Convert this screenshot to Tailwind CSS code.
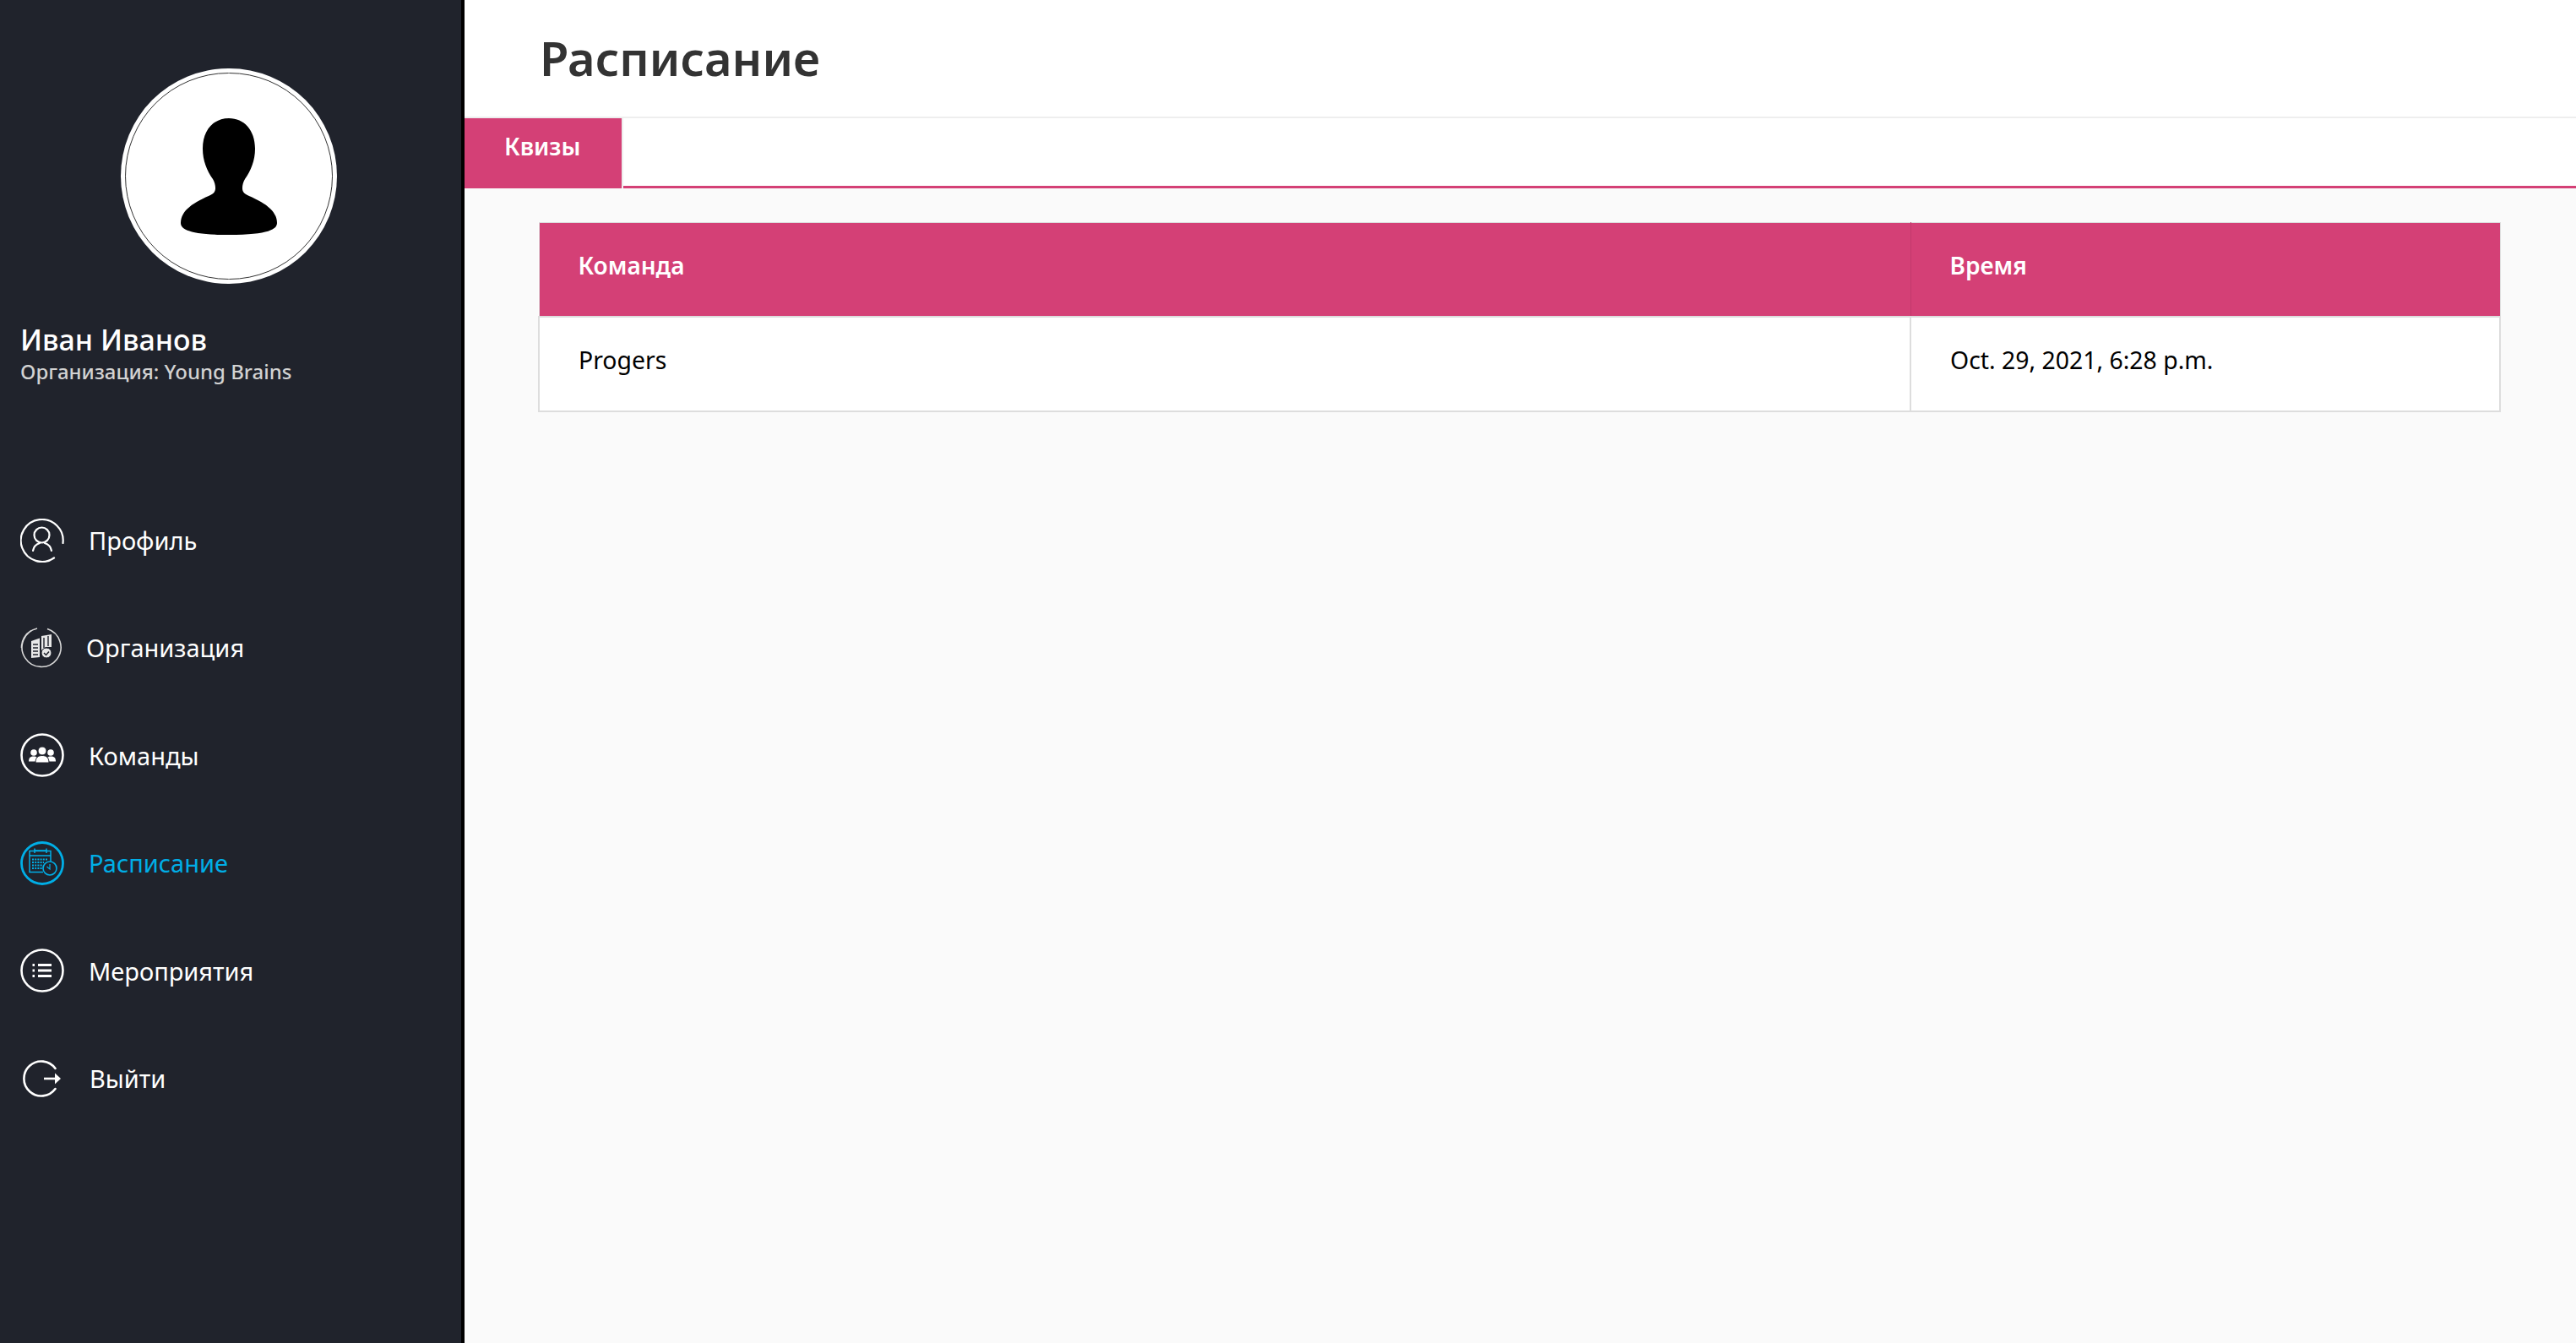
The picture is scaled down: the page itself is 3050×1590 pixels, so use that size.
<!DOCTYPE html>
<html lang="ru">
<head>
    <meta charset="UTF-8">
    <title>Расписание</title>
    <script src="https://cdn.jsdelivr.net/npm/@tailwindcss/browser@4"></script>
</head>
<body class="bg-[#fafafa] font-['Noto_Sans',sans-serif]">
    <div class="flex h-[1590px] overflow-hidden">
        <!-- Sidebar -->
        <aside class="w-[550px] shrink-0 bg-[#20232c] border-r-4 border-black pt-[81px]">
            <div class="flex justify-center pr-[4px]">
                <div class="w-[256px] h-[255px] rounded-full bg-white flex items-center justify-center">
                    <div class="w-[246px] h-[245px] rounded-full border border-[#333] flex items-center justify-center">
                        <svg class="w-[116px] h-[138px]" viewBox="0 0 116 138" fill="#000">
                            <path d="M58 0C40 0 27 14 27 36C27 50 32 62 39 72C42 77 43 84 41 87C39 91 30 93 20 99C8 106 1 114 1 124C1 131 10 138 58 138C106 138 115 131 115 124C115 114 108 106 96 99C86 93 77 91 75 87C73 84 74 77 77 72C84 62 89 50 89 36C89 14 76 0 58 0Z"/>
                        </svg>
                    </div>
                </div>
            </div>
            <div class="pl-[24px] mt-[43px]">
                <div class="text-[34px] leading-[46px] font-medium text-white">Иван Иванов</div>
                <div class="text-[24px] leading-[30px] font-medium text-[#d2d2d2]">Организация: Young Brains</div>
            </div>
            <nav class="mt-[121px] pl-[24px] text-[29px] text-white">
                <a class="flex items-center h-[127.4px]">
                    <svg class="w-[52px] h-[52px] shrink-0" viewBox="0 0 52 52" fill="none" stroke="currentColor" stroke-width="2.2" stroke-linecap="round">
                        <path d="M50.500 29A25 25 0 1 0 40 46.500"/>
                        <circle cx="25.500" cy="19.500" r="9"/>
                        <path d="M15 38C16 32 20 30 23 29M37 38C36 32 32 30 29 29"/>
                    </svg>
                    <span class="ml-[29px]">Профиль</span>
                </a>
                <a class="flex items-center h-[127.4px]">
                    <svg class="w-[52px] h-[52px] shrink-0" viewBox="0 0 52 52" fill="none">
                        <path d="M32 3.500A23 23 0 1 1 20 3M13 5.500A23 23 0 0 0 1.500 26" stroke="#d8d8d8" stroke-width="1.600"/>
                        <path d="M13 18L23 14.500V37L13 38Z" fill="#e8e8e8"/>
                        <path d="M15 22H21M15 26H21M15 30H21M15 34H21" stroke="#20232c" stroke-width="1.500"/>
                        <path d="M25 12L37 10V25H30L25 29Z" fill="#e8e8e8"/>
                        <path d="M28 14V26M33 12V24" stroke="#20232c" stroke-width="1.400"/>
                        <circle cx="31" cy="32" r="6" fill="#e8e8e8" stroke="#20232c" stroke-width="1"/>
                        <path d="M28 32L30.500 34.500L34 30.500" stroke="#20232c" stroke-width="1.500"/>
                    </svg>
                    <span class="ml-[26px]">Организация</span>
                </a>
                <a class="flex items-center h-[127.4px]">
                    <svg class="w-[52px] h-[52px] shrink-0" viewBox="0 0 52 52" fill="none">
                        <circle cx="26" cy="26" r="24.500" stroke="currentColor" stroke-width="2.600"/>
                        <g fill="currentColor">
                            <circle cx="16" cy="23" r="3.800"/>
                            <path d="M10 33.500C10 29 12 27.500 16 27.500C19 27.500 21 29 21 33.500Z"/>
                            <circle cx="36" cy="23" r="3.800"/>
                            <path d="M42 33.500C42 29 40 27.500 36 27.500C33 27.500 31 29 31 33.500Z"/>
                            <circle cx="26" cy="21" r="5" stroke="#20232c" stroke-width="1"/>
                            <path d="M18 35C18 29 21 26.500 26 26.500C31 26.500 34 29 34 35Z" stroke="#20232c" stroke-width="1"/>
                        </g>
                    </svg>
                    <span class="ml-[29px]">Команды</span>
                </a>
                <a class="flex items-center h-[127.4px] text-[#00aee6]">
                    <svg class="w-[52px] h-[52px] shrink-0" viewBox="0 0 52 52" fill="none" stroke="currentColor">
                        <circle cx="26" cy="26" r="24.500" stroke-width="2.800"/>
                        <path d="M27 36.500H11V11.500H36V24" stroke-width="1.500"/>
                        <path d="M11 17H36M17 8.500V14M31 8.500V14M17 11H31" stroke-width="1.500"/>
                        <path d="M14 21.500H33M14 25H28M14 28.500H26M14 32H26" stroke-width="2" stroke-dasharray="2 1.200"/>
                        <circle cx="35" cy="32" r="8" stroke-width="1.600" fill="#20232c"/>
                        <path d="M35 27V33L31.500 30" stroke-width="1.200"/>
                    </svg>
                    <span class="ml-[29px]">Расписание</span>
                </a>
                <a class="flex items-center h-[127.4px]">
                    <svg class="w-[52px] h-[52px] shrink-0" viewBox="0 0 52 52" fill="none" stroke="currentColor">
                        <circle cx="26" cy="26" r="24.500" stroke-width="2.600"/>
                        <path d="M21 19.500H37M21 26H37M21 32.500H37" stroke-width="3"/>
                        <path d="M14.500 19.500H17M14.500 26H17M14.500 32.500H17" stroke-width="3"/>
                    </svg>
                    <span class="ml-[29px]">Мероприятия</span>
                </a>
                <a class="flex items-center h-[127.4px]">
                    <svg class="w-[52px] h-[52px] shrink-0" viewBox="0 0 52 52" fill="none" stroke="currentColor" stroke-width="2.600" stroke-linecap="round">
                        <path d="M41.500 14A20.500 20.500 0 1 0 41.500 38"/>
                        <path d="M28 26H43" stroke-linecap="butt"/>
                        <path d="M41 19.500L48 26L41 32.500Z" fill="currentColor" stroke="none"/>
                    </svg>
                    <span class="ml-[30px]">Выйти</span>
                </a>
            </nav>
        </aside>

        <!-- Content -->
        <main class="flex-1 min-w-0">
            <header class="h-[140px] bg-white border-b-2 border-[#eeeeee] flex items-center pl-[89px] pb-[2px]">
                <h1 class="text-[56px] font-semibold text-[#333333] leading-none">Расписание</h1>
            </header>
            <div class="h-[83px] bg-white border-b-[3px] border-[#d44076] flex">
                <div class="w-[188px] h-[83px] bg-[#d44076] border-r-2 border-[#eeeeee] text-white text-[28px] font-semibold pl-[47px] pt-[13px] leading-[40px]">Квизы</div>
            </div>
            <div class="pt-[40px] pl-[87px] pr-[89px]">
                <table class="w-full border-collapse bg-white text-[28.4px] table-fixed">
                    <thead>
                        <tr class="h-[111px] bg-[#d44076] text-white text-left text-[28px]">
                            <th class="w-[1624px] font-semibold pl-[46px] pb-[10px] border border-[#d44076] border-t-[#dddddd] border-b-[#c4c4c4] border-l-[#dddddd] border-r-[#c23a6c]">Команда</th>
                            <th class="font-semibold pl-[46px] pb-[10px] border border-[#d44076] border-t-[#dddddd] border-b-[#c4c4c4] border-r-[#dddddd]">Время</th>
                        </tr>
                    </thead>
                    <tbody>
                        <tr class="h-[112px] text-black">
                            <td class="pl-[46px] pb-[8px] border-2 border-[#dddddd]">Progers</td>
                            <td class="pl-[46px] pb-[8px] border-2 border-[#dddddd]">Oct. 29, 2021, 6:28 p.m.</td>
                        </tr>
                    </tbody>
                </table>
            </div>
        </main>
    </div>
</body>
</html>
